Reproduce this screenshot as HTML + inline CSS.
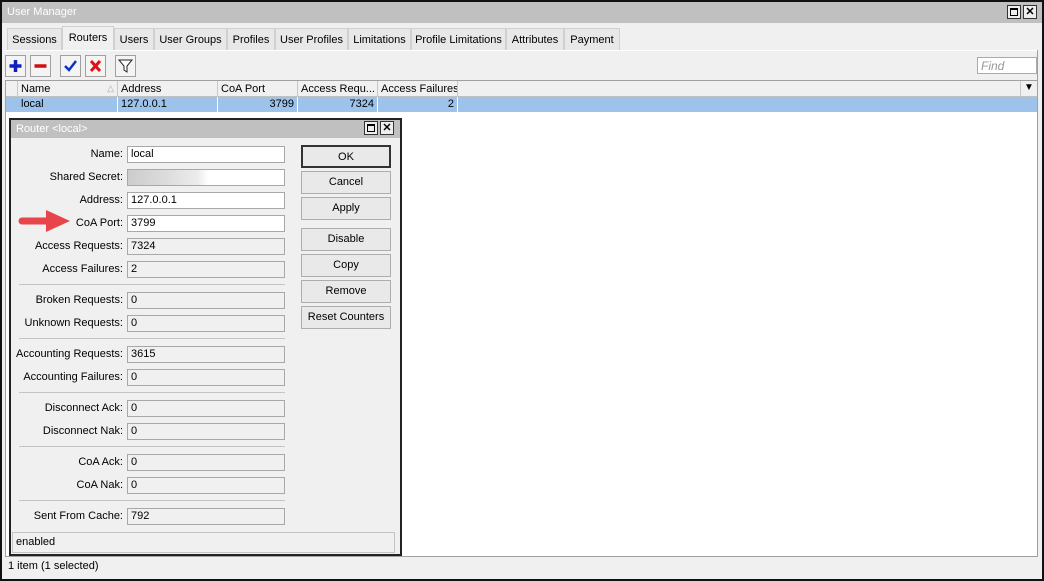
<!DOCTYPE html><html><head><style>
*{box-sizing:border-box;margin:0;padding:0}
body{width:1044px;height:581px;background:#fff;font-family:"Liberation Sans",sans-serif;font-size:11px;color:#000;position:relative;overflow:hidden}
.a{position:absolute}
.tab{position:absolute;top:28px;height:22px;border:1px solid #d0d0d0;border-bottom:none;background:#e8e8e8;padding-top:5px;text-align:center;white-space:nowrap;overflow:hidden}
.tb{position:absolute;top:55px;width:21px;height:22px;border:1px solid #a0a0a0;background:#f4f4f4}
.hd{position:absolute;top:81px;height:16px;border-right:1px solid #c8c8c8;padding:2px 3px;white-space:nowrap;overflow:hidden}
.cl{position:absolute;top:97px;height:15px;border-right:1px solid #fff;padding:1px 3px;white-space:nowrap}
.lb{position:absolute;left:2px;width:121px;text-align:right;height:17px;line-height:17px;white-space:nowrap}
.in{position:absolute;left:127px;width:158px;height:17px;border:1px solid #a8a8a8;background:#fff;padding-left:3px;line-height:15px}
.ro{background:#f0f0f0}
.sp{position:absolute;left:19px;width:266px;height:1px;background:#c4c4c4}
.bt{position:absolute;left:301px;width:90px;height:23px;border:1px solid #adadad;background:#e9e9e9;text-align:center;line-height:21px}
.wb{position:absolute;width:14px;height:14px;border:1px solid #333;background:#eee;font-size:11px;text-align:center;line-height:12px;font-weight:bold}
</style></head><body>
<div class="a" style="left:0;top:0;width:1044px;height:581px;border:2px solid #111;background:#f0f0f0"></div>
<div class="a" style="left:2px;top:2px;width:1040px;height:21px;background:#c0c0c0;color:#fff;padding:4px 5px;font-size:11px">User Manager</div>
<div class="wb" style="left:1007px;top:5px"><div style="width:8px;height:8px;border:1px solid #000;border-top-width:2px;margin:2px"></div></div>
<div class="wb" style="left:1023px;top:5px">✕</div>
<div class="tab" style="left:7px;width:55px">Sessions</div>
<div class="tab" style="left:62px;width:52px;top:26px;height:25px;background:#f0f0f0;padding-top:5px">Routers</div>
<div class="tab" style="left:114px;width:40px">Users</div>
<div class="tab" style="left:154px;width:73px">User Groups</div>
<div class="tab" style="left:227px;width:48px">Profiles</div>
<div class="tab" style="left:275px;width:73px">User Profiles</div>
<div class="tab" style="left:348px;width:63px">Limitations</div>
<div class="tab" style="left:411px;width:95px">Profile Limitations</div>
<div class="tab" style="left:506px;width:58px">Attributes</div>
<div class="tab" style="left:564px;width:56px">Payment</div>
<div class="a" style="left:5px;top:50px;width:1033px;height:1px;background:#fff"></div>
<div class="tb" style="left:5px"><svg width="19" height="20"><path d="M9.5 4v12M3.5 10h12" stroke="#1020c0" stroke-width="3.5"/></svg></div>
<div class="tb" style="left:30px"><svg width="19" height="20"><path d="M3.5 10h12" stroke="#d01010" stroke-width="3.5"/></svg></div>
<div class="tb" style="left:60px"><svg width="19" height="20"><path d="M4 10l4 4 7-9" stroke="#1030c0" stroke-width="2.5" fill="none"/></svg></div>
<div class="tb" style="left:85px"><svg width="19" height="20"><path d="M5 5l9 10M14 5l-9 10" stroke="#e01010" stroke-width="3"/></svg></div>
<div class="tb" style="left:115px"><svg width="19" height="20"><path d="M3 4h13l-5 6v6l-3-2v-4z" stroke="#222" fill="#fff"/></svg></div>
<div class="a" style="left:977px;top:57px;width:60px;height:17px;border:1px solid #aaa;background:#fff;color:#999;font-style:italic;padding:1px 3px;font-size:12px">Find</div>
<div class="a" style="left:5px;top:80px;width:1033px;height:476px;border-left:1px solid #a0a0a0;border-top:1px solid #a0a0a0;background:#fff"></div>
<div class="a" style="left:1037px;top:50px;width:1px;height:506px;background:#a0a0a0"></div>
<div class="a" style="left:6px;top:81px;width:1031px;height:16px;background:#f0f0f0;border-bottom:1px solid #c0c0c0"></div>
<div class="hd" style="left:6px;width:12px"></div>
<div class="hd" style="left:18px;width:100px">Name<span style="float:right;color:#aaa;font-size:9px">△</span></div>
<div class="hd" style="left:118px;width:100px">Address</div>
<div class="hd" style="left:218px;width:80px">CoA Port</div>
<div class="hd" style="left:298px;width:80px">Access Requ...</div>
<div class="hd" style="left:378px;width:80px">Access Failures</div>
<div class="hd" style="left:1020px;width:17px;border-left:1px solid #c8c8c8;border-right:none;font-size:10px;padding:1px 3px">▼</div>
<div class="a" style="left:6px;top:97px;width:1031px;height:15px;background:#9dc3eb"></div>
<div class="cl" style="left:18px;width:100px">local</div>
<div class="cl" style="left:118px;width:100px">127.0.0.1</div>
<div class="cl" style="left:218px;width:80px;text-align:right">3799</div>
<div class="cl" style="left:298px;width:80px;text-align:right">7324</div>
<div class="cl" style="left:378px;width:80px;text-align:right">2</div>
<div class="a" style="left:5px;top:556px;width:1033px;height:19px;border-top:1px solid #a0a0a0;background:#f0f0f0;padding:3px 3px">1 item (1 selected)</div>
<div class="a" style="left:9px;top:118px;width:393px;height:438px;border:2px solid #222;background:#f0f0f0"></div>
<div class="a" style="left:11px;top:120px;width:389px;height:18px;background:#c0c0c0;color:#fff;padding:3px 5px">Router &lt;local&gt;</div>
<div class="wb" style="left:364px;top:121px"><div style="width:8px;height:8px;border:1px solid #000;border-top-width:2px;margin:2px"></div></div>
<div class="wb" style="left:380px;top:121px">✕</div>
<div class="lb" style="top:146px">Name:</div><div class="in" style="top:146px">local</div>
<div class="lb" style="top:169px">Shared Secret:</div><div class="in" style="top:169px;background:linear-gradient(90deg,#ccc 0,#ddd 40px,#ececec 70px,#fff 80px)"></div>
<div class="lb" style="top:192px">Address:</div><div class="in" style="top:192px">127.0.0.1</div>
<div class="lb" style="top:215px">CoA Port:</div><div class="in" style="top:215px">3799</div>
<svg class="a" style="left:16px;top:206px" width="60" height="30"><path d="M6 15h28" stroke="#e8454a" stroke-width="7" stroke-linecap="round"/><path d="M30 4l24 11-24 11z" fill="#e8454a"/></svg>
<div class="lb" style="top:238px">Access Requests:</div><div class="in ro" style="top:238px">7324</div>
<div class="lb" style="top:261px">Access Failures:</div><div class="in ro" style="top:261px">2</div>
<div class="sp" style="top:284px"></div>
<div class="lb" style="top:292px">Broken Requests:</div><div class="in ro" style="top:292px">0</div>
<div class="lb" style="top:315px">Unknown Requests:</div><div class="in ro" style="top:315px">0</div>
<div class="sp" style="top:338px"></div>
<div class="lb" style="top:346px">Accounting Requests:</div><div class="in ro" style="top:346px">3615</div>
<div class="lb" style="top:369px">Accounting Failures:</div><div class="in ro" style="top:369px">0</div>
<div class="sp" style="top:392px"></div>
<div class="lb" style="top:400px">Disconnect Ack:</div><div class="in ro" style="top:400px">0</div>
<div class="lb" style="top:423px">Disconnect Nak:</div><div class="in ro" style="top:423px">0</div>
<div class="sp" style="top:446px"></div>
<div class="lb" style="top:454px">CoA Ack:</div><div class="in ro" style="top:454px">0</div>
<div class="lb" style="top:477px">CoA Nak:</div><div class="in ro" style="top:477px">0</div>
<div class="sp" style="top:500px"></div>
<div class="lb" style="top:508px">Sent From Cache:</div><div class="in ro" style="top:508px">792</div>
<div class="bt" style="top:145px;border:2px solid #333">OK</div>
<div class="bt" style="top:171px">Cancel</div>
<div class="bt" style="top:197px">Apply</div>
<div class="bt" style="top:228px">Disable</div>
<div class="bt" style="top:254px">Copy</div>
<div class="bt" style="top:280px">Remove</div>
<div class="bt" style="top:306px">Reset Counters</div>
<div class="a" style="left:12px;top:532px;width:383px;height:21px;border:1px solid #c4c4c4;padding:3px 3px">enabled</div>
</body></html>
